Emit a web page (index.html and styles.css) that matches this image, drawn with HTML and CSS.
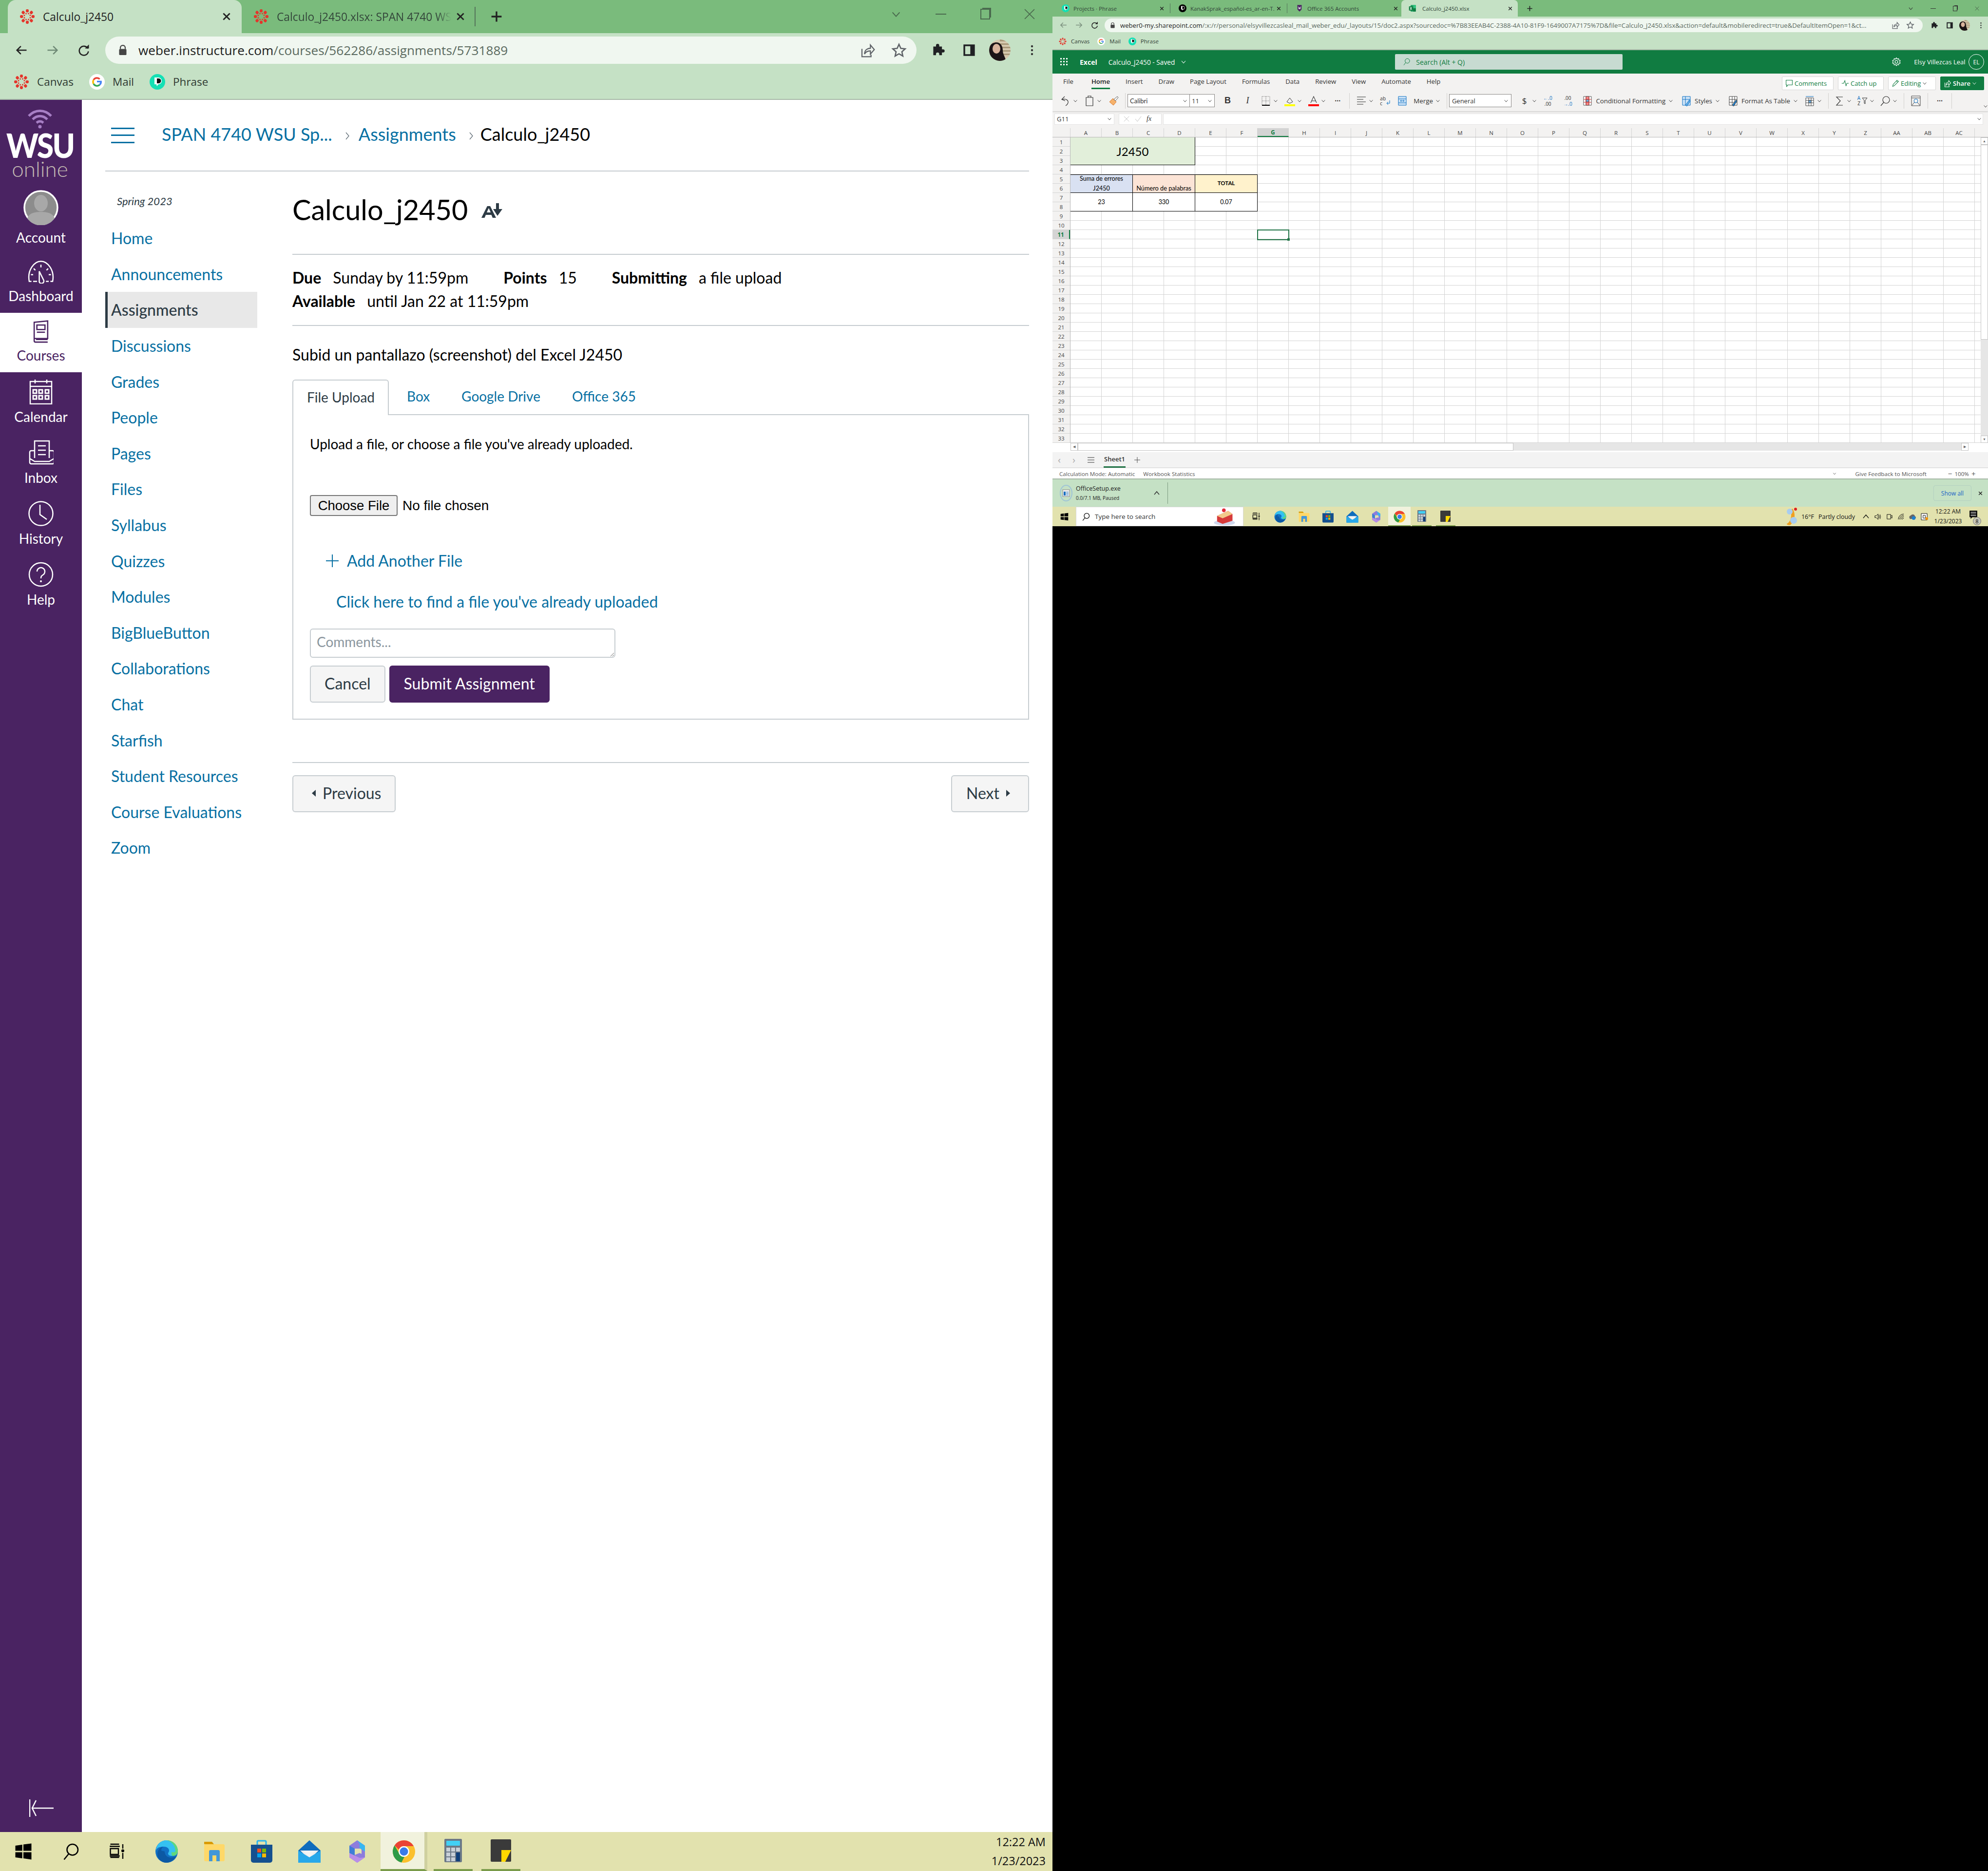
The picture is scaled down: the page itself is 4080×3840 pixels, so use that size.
FILE: index.html
```html
<!DOCTYPE html>
<html lang="en">
<head>
<meta charset="utf-8">
<title>Calculo_j2450</title>
<link rel="stylesheet" href="styles.css">
</head>
<body>
<svg class="defs" width="0" height="0" aria-hidden="true">
  <symbol id="canvas" viewBox="0 0 32 32"><g fill="#e4352b">
    <rect x="13" y="1" width="6" height="6.5" rx="2.4"/><rect x="13" y="1" width="6" height="6.5" rx="2.4" transform="rotate(45 16 16)"/><rect x="13" y="1" width="6" height="6.5" rx="2.4" transform="rotate(90 16 16)"/><rect x="13" y="1" width="6" height="6.5" rx="2.4" transform="rotate(135 16 16)"/><rect x="13" y="1" width="6" height="6.5" rx="2.4" transform="rotate(180 16 16)"/><rect x="13" y="1" width="6" height="6.5" rx="2.4" transform="rotate(225 16 16)"/><rect x="13" y="1" width="6" height="6.5" rx="2.4" transform="rotate(270 16 16)"/><rect x="13" y="1" width="6" height="6.5" rx="2.4" transform="rotate(315 16 16)"/>
    <circle cx="16" cy="9.5" r="1.5" transform="rotate(22 16 16)"/><circle cx="16" cy="9.5" r="1.5" transform="rotate(67 16 16)"/><circle cx="16" cy="9.5" r="1.5" transform="rotate(112 16 16)"/><circle cx="16" cy="9.5" r="1.5" transform="rotate(157 16 16)"/><circle cx="16" cy="9.5" r="1.5" transform="rotate(202 16 16)"/><circle cx="16" cy="9.5" r="1.5" transform="rotate(247 16 16)"/><circle cx="16" cy="9.5" r="1.5" transform="rotate(292 16 16)"/><circle cx="16" cy="9.5" r="1.5" transform="rotate(337 16 16)"/></g></symbol>
  <symbol id="phrase" viewBox="0 0 32 32"><circle cx="16" cy="16" r="16" fill="#14e0b4"/><path d="M10 7h8a7 7 0 0 1 0 14l-3 4-1-4h-4z" fill="#fff"/><path d="M15 9h3a5 5 0 0 1 1 10h-4z" fill="#111"/></symbol>
  <symbol id="phrase-k" viewBox="0 0 32 32"><circle cx="16" cy="16" r="16" fill="#000"/><path d="M10 7h8a7 7 0 0 1 0 14l-3 4-1-4h-4z" fill="#fff"/><path d="M15 9h3a5 5 0 0 1 1 10h-4z" fill="#000"/></symbol>
  <symbol id="google" viewBox="0 0 32 32"><circle cx="16" cy="16" r="16" fill="#fff"/><path d="M16 8a8 8 0 0 1 5.6 2.2" fill="none" stroke="#ea4335" stroke-width="3.4"/><path d="M9 12a8 8 0 0 1 7-4" fill="none" stroke="#ea4335" stroke-width="3.4"/><path d="M9 20a8 8 0 0 1 0-8" fill="none" stroke="#fbbc05" stroke-width="3.4"/><path d="M9 20a8 8 0 0 0 12.6 2" fill="none" stroke="#34a853" stroke-width="3.4"/><path d="M16 15.4h8.2a8 8 0 0 1-2.6 6.6" fill="none" stroke="#4285f4" stroke-width="3.4"/></symbol>
  <symbol id="x" viewBox="0 0 20 20"><path d="M4 4l12 12M16 4L4 16" stroke="currentColor" stroke-width="2.6" fill="none"/></symbol>
  <symbol id="plus" viewBox="0 0 20 20"><path d="M10 2v16M2 10h16" stroke="currentColor" stroke-width="2.6" fill="none"/></symbol>
  <symbol id="chev" viewBox="0 0 12 12"><path d="M2 4l4 4.5L10 4" stroke="currentColor" stroke-width="1.1" fill="none"/></symbol>
  <symbol id="back" viewBox="0 0 24 24"><path d="M21 12H4M11 5l-7 7 7 7" stroke="currentColor" stroke-width="2.2" fill="none"/></symbol>
  <symbol id="fwd" viewBox="0 0 24 24"><path d="M3 12h17M13 5l7 7-7 7" stroke="currentColor" stroke-width="2.2" fill="none"/></symbol>
  <symbol id="reload" viewBox="0 0 24 24"><path d="M19 9a8 8 0 1 0 1 5" stroke="currentColor" stroke-width="2.2" fill="none"/><path d="M14 9h7V2z" fill="currentColor"/></symbol>
  <symbol id="lock" viewBox="0 0 16 20"><path d="M4 8V6a4 4 0 0 1 8 0v2" stroke="#444" stroke-width="1.8" fill="none"/><rect x="2" y="8" width="12" height="10" rx="1.5" fill="#444"/></symbol>
  <symbol id="share" viewBox="0 0 24 24"><path d="M3 10v12h14v-3" stroke="#5f6368" stroke-width="1.7" fill="none"/><path d="M7 18c0-6 4-9 9-9V4l6 7-6 7v-5c-4 0-7 1-9 5z" stroke="#5f6368" stroke-width="1.7" fill="none"/></symbol>
  <symbol id="star" viewBox="0 0 24 24"><path d="M12 3l2.8 6.2 6.7.7-5 4.5 1.4 6.6L12 17.6 6.1 21l1.4-6.6-5-4.5 6.7-.7z" stroke="#5f6368" stroke-width="2" fill="none"/></symbol>
  <symbol id="puzzle" viewBox="0 0 24 24"><path d="M4 7h5V5a3 3 0 0 1 6 0v2h5v5h2a3 3 0 0 1 0 6h-2v5h-5v-2a3 3 0 0 0-6 0v2H4z" fill="#202124" transform="translate(0 -1) scale(.95)"/></symbol>
  <symbol id="panel" viewBox="0 0 24 24"><path fill-rule="evenodd" d="M2 2h20v20H2zM5 5v14h9V5z" fill="#202124"/></symbol>
  <symbol id="dots" viewBox="0 0 8 24"><circle cx="4" cy="4" r="2.2" fill="#333"/><circle cx="4" cy="12" r="2.2" fill="#333"/><circle cx="4" cy="20" r="2.2" fill="#333"/></symbol>
  <symbol id="avatar" viewBox="0 0 44 44"><clipPath id="ac"><circle cx="22" cy="22" r="22"/></clipPath><g clip-path="url(#ac)"><rect width="44" height="44" fill="#d6c9ae"/><path d="M22 0h22v4H22zm0 8h22v3H22zm0 7h22v3H22zm0 7h22v3H22zm0 7h22v3H22z" fill="#a89878"/><path d="M0 44V22C0 10 8 6 15 6s13 6 13 16 6 14 6 22z" fill="#1c1416"/><ellipse cx="15" cy="19" rx="8" ry="10" fill="#d9b39c"/></g></symbol>
  <symbol id="win" viewBox="0 0 24 24"><path d="M1 4l9.5-1.4V11H1zM12 2.4L23 1v10H12zM1 13h9.5v8.4L1 20zM12 13h11v10l-11-1.6z" fill="#000"/></symbol>
  <symbol id="mag" viewBox="0 0 24 24"><circle cx="14.5" cy="9.5" r="7.5" fill="none" stroke="#000" stroke-width="1.7"/><path d="M9.5 15L3 23" stroke="#000" stroke-width="1.7"/></symbol>
  <symbol id="taskv" viewBox="0 0 24 24"><path d="M3 2h12M3 4v1h12V4M3 8h11v8H3zM3 20h12M3 19v-1h12v1M20 2v6M20 14v8" stroke="#000" stroke-width="1.6" fill="none"/><circle cx="20" cy="11" r="2" fill="#000"/></symbol>
  <symbol id="edge" viewBox="0 0 48 48"><circle cx="24" cy="24" r="23" fill="#1170c4"/><path d="M2 22C3 9 13 1 24 1c13 0 23 10 23 22 0 7-6 10-12 10-5 0-8-2-8-5 0-2 2-3 2-6 0-5-5-8-11-8C10 14 4 16 2 22z" fill="#35c1f1"/><path d="M47 23c0-12-10-22-23-22 9 2 18 10 18 22-1 3-4 3-8 2 0 3 0 8 3 8 6 0 10-4 10-10z" fill="#5fd77c"/><path d="M20 24c0 9 8 14 16 12 3 0 6-1 8-3-4 8-12 14-21 14-10 0-18-8-18-18 0-7 5-14 12-15-3 2-4 5-4 8 0 1 7 1 7 2z" fill="#0c59a4"/></symbol>
  <symbol id="files" viewBox="0 0 48 48"><path d="M3 4h16l4 5H3z" fill="#d99a00"/><rect x="3" y="9" width="42" height="35" rx="3" fill="#ffd869"/><path d="M13 44V24a3 3 0 0 1 3-3h16a3 3 0 0 1 3 3v20h-7V32h-8v12z" fill="#4297d9"/></symbol>
  <symbol id="store" viewBox="0 0 48 48"><path d="M15 10V4a2 2 0 0 1 2-2h14a2 2 0 0 1 2 2v6" fill="none" stroke="#2ab4ee" stroke-width="3"/><path d="M2 10h44v32a5 5 0 0 1-5 5H7a5 5 0 0 1-5-5z" fill="#15508f"/><rect x="15" y="18" width="8" height="8" fill="#f25022"/><rect x="25" y="18" width="8" height="8" fill="#7fba00"/><rect x="15" y="28" width="8" height="8" fill="#00a4ef"/><rect x="25" y="28" width="8" height="8" fill="#ffb900"/></symbol>
  <symbol id="mail" viewBox="0 0 48 48"><path d="M1 22L24 1l23 21v25H1z" fill="#0f6cbd"/><path d="M5 22h38L24 40z" fill="#eee"/><path d="M1 22l23 25H1z" fill="#1aa0e4"/><path d="M47 22L24 47h23z" fill="#3ac6f5"/><path d="M11 22l13 14 13-14z" fill="#f4f4f4"/><path d="M1 22l23 14 23-14v25H1z" fill="#28a8ea"/></symbol>
  <symbol id="loop" viewBox="0 0 48 48"><path d="M24 1l16 11v24L24 47 8 36V12z" fill="#8d7ddc"/><path d="M24 1l16 11v12L29 17V8z" fill="#38b6f1"/><path d="M8 12l11 6v20l-11-2z" fill="#3e7fd6"/><path d="M24 47L8 36v-9l21 10 11-1z" fill="#b98ee8"/><path d="M19 18h10a4 4 0 0 1 4 4v7l-4-2-10 4z" fill="#e2e2ae"/></symbol>
  <symbol id="chrome" viewBox="0 0 48 48"><circle cx="24" cy="24" r="23" fill="#fbc02d"/><path d="M24 1a23 23 0 0 1 20 12H24a11 11 0 0 0-10.500 7L4.700 11.500A23 23 0 0 1 24 1z" fill="#ea4335"/><path d="M4.700 11.500L14 27.500a11 11 0 0 0 11 7.400L19 46.500A23 23 0 0 1 4.700 11.500z" fill="#2e9b47"/><circle cx="24" cy="24" r="11" fill="#fff"/><circle cx="24" cy="24" r="8.500" fill="#3a7be8"/></symbol>
  <symbol id="calc" viewBox="0 0 36 48"><rect width="36" height="48" rx="2" fill="#6b7886"/><rect x="4" y="4" width="28" height="10" rx="1" fill="#41d0f5"/><g fill="#c8d0d8"><rect x="4" y="18" width="8" height="8"/><rect x="14" y="18" width="8" height="8"/><rect x="24" y="18" width="8" height="8"/><rect x="4" y="28" width="8" height="8"/><rect x="14" y="28" width="8" height="8"/><rect x="4" y="38" width="8" height="8"/><rect x="14" y="38" width="8" height="8"/></g><rect x="24" y="28" width="8" height="18" fill="#103f7a"/></symbol>
  <symbol id="sticky" viewBox="0 0 42 46"><rect width="42" height="46" rx="2" fill="#3a3a3a"/><path d="M22 22h20L30 46h-8z" fill="#ffd800"/></symbol>
  <symbol id="excel" viewBox="0 0 24 24"><rect x="6" y="2" width="16" height="20" rx="1.500" fill="#21a366"/><rect x="14" y="2" width="8" height="10" fill="#33c481"/><rect x="14" y="12" width="8" height="10" fill="#107c41"/><rect x="1" y="6" width="13" height="13" rx="1" fill="#107c41"/><path d="M4.500 8.500l5 8M9.500 8.500l-5 8" stroke="#fff" stroke-width="1.600"/></symbol>
  <symbol id="wsu" viewBox="0 0 24 28"><path d="M4 2h16l-1 17-7 7-7-7z" fill="#4a2362"/><path d="M8 8l2 9 2-6 2 6 2-9" stroke="#fff" stroke-width="1.600" fill="none"/></symbol>
</svg>

<main class="desktop">
  <section class="win-left">
    <header class="chrome-tabs">
      <div class="ctab ctab-active">
        <svg class="fav"><use href="#canvas"/></svg>
        <span class="ctab-title">Calculo_j2450</span>
        <svg class="ctab-x"><use href="#x"/></svg>
      </div>
      <div class="ctab">
        <svg class="fav"><use href="#canvas"/></svg>
        <span class="ctab-title ctab-fade">Calculo_j2450.xlsx: SPAN 4740 WSU</span>
        <svg class="ctab-x"><use href="#x"/></svg>
      </div>
      <span class="ctab-sep"></span>
      <svg class="ctab-plus"><use href="#plus"/></svg>
      <div class="winctl">
        <svg class="wc"><use href="#chev"/></svg>
        <span class="wc-min"></span>
        <span class="wc-max"></span>
        <svg class="wc wc-close" viewBox="0 0 20 20"><path d="M1 1l18 18M19 1L1 19" stroke="currentColor" stroke-width="1.500"/></svg>
      </div>
    </header>
    <div class="chrome-bar">
      <svg class="nav-ic"><use href="#back"/></svg>
      <svg class="nav-ic dim"><use href="#fwd"/></svg>
      <svg class="nav-ic"><use href="#reload"/></svg>
      <div class="omni">
        <svg class="lock"><use href="#lock"/></svg>
        <span class="url"><b>weber.instructure.com</b>/courses/562286/assignments/5731889</span>
        <svg class="omni-ic"><use href="#share"/></svg>
        <svg class="omni-ic"><use href="#star"/></svg>
      </div>
      <svg class="ext-ic"><use href="#puzzle"/></svg>
      <svg class="ext-ic"><use href="#panel"/></svg>
      <svg class="ava"><use href="#avatar"/></svg>
      <svg class="dots"><use href="#dots"/></svg>
    </div>
    <nav class="chrome-marks">
      <a class="mark"><svg class="fav"><use href="#canvas"/></svg>Canvas</a>
      <a class="mark"><svg class="fav"><use href="#google"/></svg>Mail</a>
      <a class="mark"><svg class="fav"><use href="#phrase"/></svg>Phrase</a>
    </nav>

    <div class="app">
      <aside class="global-nav">
        <div class="logo">
          <svg class="wifi" viewBox="0 0 52 40"><path d="M3 14C16 0 36 0 49 14M11 21c9-9 21-9 30 0M19 28c5-4 9-4 14 0" fill="none" stroke="#a77fc5" stroke-width="5"/><circle cx="26" cy="36" r="3.500" fill="#a77fc5"/></svg>
          <span class="logo-wsu">WSU</span>
          <span class="logo-online">online</span>
        </div>
        <a class="gn gn-account">
          <svg class="gn-avatar" viewBox="0 0 72 72"><circle cx="36" cy="36" r="34" fill="#8c8c8c" stroke="#fff" stroke-width="3.500"/><ellipse cx="36" cy="27" rx="14" ry="17" fill="#a8a8a8"/><path d="M8 58c4-12 18-13 28-13s24 1 28 13a34 34 0 0 1-56 0z" fill="#a8a8a8"/></svg>
          <span>Account</span>
        </a>
        <a class="gn gn-short">
          <svg class="gn-ic gn-dash" viewBox="2 4 48 42" fill="none" stroke="#fff" stroke-width="2.200"><path d="M9 42H5C1 22 14 6 26 6s25 16 21 36h-4"/><path d="M26 12v5M13 19l3 3M39 19l-3 3M8 30h4M44 30h-4"/><path d="M23 24l8 16a4 4 0 0 1-8 3z"/><path d="M12 42h7M35 42h5"/></svg>
          <span>Dashboard</span>
        </a>
        <a class="gn gn-short gn-active">
          <svg class="gn-ic" viewBox="0 0 52 52" fill="none" stroke="#4a2362" stroke-width="2.800"><path d="M11 42V6l30-3v39zM11 42v5a3 3 0 0 0 3 3h27M15 44h26"/><rect x="17" y="12" width="18" height="10"/><path d="M17 28h18"/></svg>
          <span>Courses</span>
        </a>
        <a class="gn">
          <svg class="gn-ic" viewBox="0 0 52 52" fill="none" stroke="#fff" stroke-width="2.500"><rect x="4" y="5" width="44" height="46"/><path d="M4 15h44M14 1v8M38 1v8"/><g stroke-width="3"><path d="M10 22h7v7h-7zM22 22h7v7h-7zM35 22h7v7h-7zM10 34h7v7h-7zM22 34h7v7h-7zM35 34h7v7h-7z"/></g></svg>
          <span>Calendar</span>
        </a>
        <a class="gn">
          <svg class="gn-ic" viewBox="0 0 52 52" fill="none" stroke="#fff" stroke-width="2.500"><path d="M13 37V2h30v35"/><path d="M20 12h16M20 21h16M20 30h16"/><path d="M13 22H6a3 3 0 0 0-3 3v21a3 3 0 0 0 3 3h44a3 3 0 0 0 3-3V25a3 3 0 0 0-3-3h-7M3 38l10 6h30l10-6"/></svg>
          <span>Inbox</span>
        </a>
        <a class="gn">
          <svg class="gn-ic" viewBox="0 0 52 52" fill="none" stroke="#fff" stroke-width="2.500"><circle cx="26" cy="26" r="24.500"/><path d="M24 12v20l14 10" transform="translate(0 -4)"/></svg>
          <span>History</span>
        </a>
        <a class="gn">
          <svg class="gn-ic" viewBox="0 0 52 52" fill="none" stroke="#fff" stroke-width="2.500"><circle cx="26" cy="26" r="24"/><path d="M18 20a8 8 0 1 1 12 7c-3 2-4 3-4 7"/><circle cx="26" cy="40" r="2" fill="#fff" stroke="none"/></svg>
          <span>Help</span>
        </a>
        <svg class="collapse" viewBox="0 0 50 36" fill="none" stroke="#fff" stroke-width="2.500"><path d="M1 0v36M50 18H6M14 2L6 18l8 16"/></svg>
      </aside>

      <div class="content">
        <header class="crumbs">
          <span class="burger"><i></i><i></i><i></i></span>
          <a class="crumb">SPAN 4740 WSU Sp...</a>
          <svg class="crumb-sep" viewBox="0 0 10 20"><path d="M2 3l6 7-6 7" fill="none" stroke="#5f6c75" stroke-width="1.300"/></svg>
          <a class="crumb">Assignments</a>
          <svg class="crumb-sep" viewBox="0 0 10 20"><path d="M2 3l6 7-6 7" fill="none" stroke="#5f6c75" stroke-width="1.300"/></svg>
          <span class="crumb crumb-now">Calculo_j2450</span>
        </header>
        <div class="course">
          <nav class="course-nav">
            <div class="term">Spring 2023</div>
            <a class="cn">Home</a>
            <a class="cn">Announcements</a>
            <a class="cn cn-active">Assignments</a>
            <a class="cn">Discussions</a>
            <a class="cn">Grades</a>
            <a class="cn">People</a>
            <a class="cn">Pages</a>
            <a class="cn">Files</a>
            <a class="cn">Syllabus</a>
            <a class="cn">Quizzes</a>
            <a class="cn">Modules</a>
            <a class="cn">BigBlueButton</a>
            <a class="cn">Collaborations</a>
            <a class="cn">Chat</a>
            <a class="cn">Starfish</a>
            <a class="cn">Student Resources</a>
            <a class="cn">Course Evaluations</a>
            <a class="cn">Zoom</a>
          </nav>
          <article class="assignment">
            <div class="title-row">
              <h1 class="title">Calculo_j2450</h1>
              <svg class="a-ic" viewBox="0 0 44 30"><path d="M0 30L12 6h6l12 24h-7l-2.500-6H9l-2.500 6zM11 19h8l-4-9z" fill="#2d3b45"/><path d="M30 0h6v12h7L33 26 24 12h6z" fill="#2d3b45"/></svg>
            </div>
            <div class="details">
              <div class="det-line">
                <span class="det"><b>Due</b>Sunday by 11:59pm</span>
                <span class="det"><b>Points</b>15</span>
                <span class="det"><b>Submitting</b>a file upload</span>
              </div>
              <div class="det-line"><span class="det"><b>Available</b>until Jan 22 at 11:59pm</span></div>
            </div>
            <p class="desc">Subid un pantallazo (screenshot) del Excel J2450</p>
            <div class="tabs">
              <span class="tab tab-on">File Upload</span>
              <a class="tab tab-box">Box</a>
              <a class="tab tab-gd">Google Drive</a>
              <a class="tab tab-o">Office 365</a>
            </div>
            <form class="panel">
              <p class="panel-intro">Upload a file, or choose a file you've already uploaded.</p>
              <input class="file" type="file">
              <a class="add"><svg class="add-ic" viewBox="0 0 26 26"><path d="M13 0v26M0 13h26" stroke="#0770a3" stroke-width="2" fill="none"/></svg>Add Another File</a>
              <a class="find">Click here to find a file you've already uploaded</a>
              <textarea class="comments" placeholder="Comments..."></textarea>
              <div class="actions">
                <button class="btn" type="button">Cancel</button>
                <button class="btn btn-primary" type="button">Submit Assignment</button>
              </div>
            </form>
            <footer class="pager">
              <button class="btn btn-prev" type="button"><i class="tri tri-l"></i>Previous</button>
              <button class="btn btn-next" type="button">Next<i class="tri tri-r"></i></button>
            </footer>
          </article>
        </div>
      </div>
    </div>

    <footer class="taskbar">
      <svg class="tb-ic tb-win"><use href="#win"/></svg>
      <svg class="tb-ic tb-mag"><use href="#mag"/></svg>
      <svg class="tb-ic tb-task"><use href="#taskv"/></svg>
      <svg class="tb-app tb-first"><use href="#edge"/></svg>
      <svg class="tb-app"><use href="#files"/></svg>
      <svg class="tb-app"><use href="#store"/></svg>
      <svg class="tb-app"><use href="#mail"/></svg>
      <svg class="tb-app"><use href="#loop"/></svg>
      <span class="tb-on"><svg class="tb-app"><use href="#chrome"/></svg></span>
      <span class="tb-run"><svg class="tb-calc"><use href="#calc"/></svg></span>
      <span class="tb-run"><svg class="tb-sticky"><use href="#sticky"/></svg></span>
      <div class="clock"><span>12:22 AM</span><span>1/23/2023</span></div>
    </footer>
  </section>

  <section class="win-right">
    <header class="r-tabs">
      <div class="rt"><svg class="rfav"><use href="#phrase"/></svg><span class="rt-t">Projects · Phrase</span><svg class="rt-x"><use href="#x"/></svg></div>
      <span class="rt-sep"></span>
      <div class="rt"><svg class="rfav"><use href="#phrase-k"/></svg><span class="rt-t">KanakSprak_español-es_ar-en-T.r</span><svg class="rt-x"><use href="#x"/></svg></div>
      <span class="rt-sep"></span>
      <div class="rt"><svg class="rfav"><use href="#wsu"/></svg><span class="rt-t">Office 365 Accounts</span><svg class="rt-x"><use href="#x"/></svg></div>
      <div class="rt rt-on"><svg class="rfav"><use href="#excel"/></svg><span class="rt-t">Calculo_j2450.xlsx</span><svg class="rt-x"><use href="#x"/></svg></div>
      <svg class="rt-plus"><use href="#plus"/></svg>
      <div class="r-winctl">
        <svg class="rwc"><use href="#chev"/></svg>
        <span class="rwc-min"></span>
        <span class="rwc-max"></span>
        <svg class="rwc" viewBox="0 0 20 20"><path d="M3 3l14 14M17 3L3 17" stroke="#333" stroke-width="1.200"/></svg>
      </div>
    </header>
    <div class="r-bar">
      <svg class="rnav dim"><use href="#back"/></svg>
      <svg class="rnav dim"><use href="#fwd"/></svg>
      <svg class="rnav"><use href="#reload"/></svg>
      <div class="r-omni">
        <svg class="r-lock"><use href="#lock"/></svg>
        <span class="r-url"><b>weber0-my.sharepoint.com</b>/:x:/r/personal/elsyvillezcasleal_mail_weber_edu/_layouts/15/doc2.aspx?sourcedoc=%7B83EEAB4C-2388-4A10-81F9-1649007A7175%7D&amp;file=Calculo_j2450.xlsx&amp;action=default&amp;mobileredirect=true&amp;DefaultItemOpen=1&amp;ct...</span>
        <svg class="r-oic"><use href="#share"/></svg>
        <svg class="r-oic"><use href="#star"/></svg>
      </div>
      <svg class="r-ext"><use href="#puzzle"/></svg>
      <svg class="r-ext"><use href="#panel"/></svg>
      <svg class="r-ava"><use href="#avatar"/></svg>
      <svg class="r-dots"><use href="#dots"/></svg>
    </div>
    <nav class="r-marks">
      <a class="r-mark"><svg class="rfav"><use href="#canvas"/></svg>Canvas</a>
      <a class="r-mark"><svg class="rfav"><use href="#google"/></svg>Mail</a>
      <a class="r-mark"><svg class="rfav"><use href="#phrase"/></svg>Phrase</a>
    </nav>

    <header class="xl-head">
      <svg class="waffle" viewBox="0 0 16 16" fill="#fff"><rect width="3" height="3"/><rect x="6" width="3" height="3"/><rect x="12" width="3" height="3"/><rect y="6" width="3" height="3"/><rect x="6" y="6" width="3" height="3"/><rect x="12" y="6" width="3" height="3"/><rect y="12" width="3" height="3"/><rect x="6" y="12" width="3" height="3"/><rect x="12" y="12" width="3" height="3"/></svg>
      <b class="xl-brand">Excel</b>
      <span class="xl-doc">Calculo_j2450 - Saved</span>
      <svg class="xl-chev"><use href="#chev"/></svg>
      <div class="xl-search">
        <svg class="xl-mag" viewBox="0 0 24 24"><circle cx="14" cy="9" r="7" fill="none" stroke="#107c41" stroke-width="1.500"/><path d="M9 14l-6 8" stroke="#107c41" stroke-width="1.500"/></svg>
        <span>Search (Alt + Q)</span>
      </div>
      <svg class="xl-gear" viewBox="0 0 24 24" fill="none" stroke="#fff" stroke-width="1.500"><circle cx="12" cy="12" r="3.500"/><path d="M12 2l2 3 3.500-1 .5 3.500 3.500 1-1.500 3.500 1.500 3-3.500 1-.5 3.500-3.500-1-2 3-2-3-3.500 1-.5-3.500-3.500-1 1.500-3-1.500-3.500 3.500-1 .5-3.500 3.500 1z"/></svg>
      <span class="xl-user">Elsy Villezcas Leal</span>
      <span class="xl-init">EL</span>
    </header>

    <section class="ribbon">
      <div class="rb-top">
        <nav class="rb-tabs">
          <a class="rb-file">File</a><a class="rb-home">Home</a><a>Insert</a><a>Draw</a><a>Page Layout</a><a>Formulas</a><a>Data</a><a>Review</a><a>View</a><a>Automate</a><a>Help</a>
        </nav>
        <div class="rb-btns">
          <a class="rbb rbb-c"><svg class="rbi" viewBox="0 0 20 20" fill="none" stroke="#107c41" stroke-width="1.300"><path d="M2 2h16v12H7l-4 5 1-5H2z"/></svg>Comments</a>
          <a class="rbb rbb-u"><svg class="rbi" viewBox="0 0 20 20" fill="none" stroke="#107c41" stroke-width="1.300"><path d="M1 10h5l3-7 3 14 2-7h5"/></svg>Catch up</a>
          <a class="rbb rbb-e"><svg class="rbi" viewBox="0 0 20 20" fill="none" stroke="#107c41" stroke-width="1.300"><path d="M3 18l1-5L14 2l4 3L7 16zM12 4l4 3"/></svg>Editing<svg class="tc"><use href="#chev"/></svg></a>
          <a class="rbb rbb-s"><svg class="rbi" viewBox="0 0 20 20" fill="none" stroke="#fff" stroke-width="1.300"><path d="M3 8v11h11v-3M6 15c0-5 3-8 7-8V3l5 6-5 6v-4c-3 0-5 1-7 4z"/></svg>Share<svg class="tc"><use href="#chev"/></svg></a>
        </div>
      </div>
      <div class="rb-tools">
        <div class="tl">
          <span class="tg"><svg class="ti" viewBox="0 0 22 22" fill="none" stroke="#333" stroke-width="1.200"><path d="M9 2L3 8l7 3M4 8c8-2 13 2 12 7-1 3-3 5-5 6"/></svg><svg class="tc"><use href="#chev"/></svg></span>
          <span class="tg"><svg class="ti" viewBox="0 0 22 22" fill="none" stroke="#333" stroke-width="1.200"><path d="M4 4h14v17H4zM8 4V1h6v3z"/></svg><svg class="tc"><use href="#chev"/></svg></span>
          <svg class="ti" viewBox="0 0 22 22" fill="none"><path d="M3 13l7-7 7 7-6 7z" fill="#f6b26b" stroke="#d9762a"/><path d="M12 8l7-6 2 2-6 7z" fill="#fff" stroke="#555"/></svg>
          <span class="tsep"></span>
          <div class="fbox">
            <span class="fbox-a">Calibri<svg class="tc"><use href="#chev"/></svg></span>
            <span class="fbox-b">11<svg class="tc"><use href="#chev"/></svg></span>
          </div>
          <b class="tx tx-b">B</b>
          <i class="tx tx-i">I</i>
          <span class="tg"><svg class="ti" viewBox="0 0 22 22" fill="none" stroke="#888" stroke-width="1" stroke-dasharray="2 1"><path d="M3 2h16v18H3zM3 11h16M11 2v18"/><path d="M3 20h16" stroke="#000" stroke-width="2" stroke-dasharray="none"/></svg><svg class="tc"><use href="#chev"/></svg></span>
          <span class="tg"><svg class="ti" viewBox="0 0 22 22" fill="none" stroke="#333"><path d="M5 13l6-8 6 8-6 3z"/><path d="M0 18h22v5H0z" fill="#ff0" stroke="none"/></svg><svg class="tc"><use href="#chev"/></svg></span>
          <span class="tg"><svg class="ti" viewBox="0 0 22 22" fill="none" stroke="#333" stroke-width="1.100"><path d="M5 15l6-13 6 13M7 11h8"/><path d="M0 18h22v5H0z" fill="#f00" stroke="none"/></svg><svg class="tc"><use href="#chev"/></svg></span>
          <span class="tdots">···</span>
          <span class="tsep"></span>
          <span class="tg"><svg class="ti" viewBox="0 0 22 22" stroke="#333" stroke-width="1.200"><path d="M2 3h18M2 8h13M2 13h18M2 18h13"/></svg><svg class="tc"><use href="#chev"/></svg></span>
          <span class="wrap-ic"><span class="wrap-t">ab<br>c</span><svg class="wrap-a" viewBox="0 0 10 12"><path d="M8 1v6H2l3-3M2 7l3 3" stroke="#0b6fc2" fill="none"/></svg></span>
          <span class="tg tg-merge"><svg class="ti" viewBox="0 0 22 22" fill="#cfe4f7" stroke="#0b6fc2"><path d="M3 2h16v18H3z"/><path d="M3 7h16M3 15h16M7 11h8M7 11l2-2M7 11l2 2M15 11l-2-2M15 11l-2 2"/></svg><span class="tl-t">Merge</span><svg class="tc"><use href="#chev"/></svg></span>
          <span class="tsep"></span>
          <span class="gbox">General<svg class="tc"><use href="#chev"/></svg></span>
          <span class="tg tg-d"><span class="tdollar">$</span><svg class="tc"><use href="#chev"/></svg></span>
          <span class="dec dec-first"><i class="dec-a">←.0</i><i>.00</i></span>
          <span class="dec"><i>.00</i><i class="dec-a">→.0</i></span>
          <span class="tg tg-t"><svg class="ti" viewBox="0 0 22 22" fill="#fff" stroke="#555"><path d="M3 2h16v18H3z"/><path d="M8 2h6v18H8z" fill="#f88"/><path d="M8 8h6v5H8z" fill="#6ab0e6"/><path d="M3 8h16M3 14h16M8 2v18M14 2v18" stroke="#c33"/></svg><span class="tl-t">Conditional Formatting</span><svg class="tc"><use href="#chev"/></svg></span>
          <span class="tg tg-t"><svg class="ti" viewBox="0 0 22 22" fill="#cfe4f7" stroke="#0b6fc2"><path d="M3 2h16v18H3zM3 8h16M9 2v18"/><path d="M9 20l8-11 2 2-7 11z" fill="#6ab0e6"/></svg><span class="tl-t">Styles</span><svg class="tc"><use href="#chev"/></svg></span>
          <span class="tg tg-t"><svg class="ti" viewBox="0 0 22 22" fill="#fff" stroke="#444"><path d="M3 2h16v18H3zM3 8h16M3 14h16M9 2v18M14 2v18"/><path d="M9 20l8-11 2 2-7 11z" fill="#1a7fd0"/></svg><span class="tl-t">Format As Table</span><svg class="tc"><use href="#chev"/></svg></span>
          <span class="tg"><svg class="ti" viewBox="0 0 22 22" fill="#fff" stroke="#444"><path d="M3 5h16v16H3zM3 10h16M3 15h16M9 5v16M14 5v16"/><path d="M9 10h5v5H9z" fill="#6ab0e6"/><path d="M3 2h16" stroke="#0b6fc2"/></svg><svg class="tc"><use href="#chev"/></svg></span>
          <span class="tsep"></span>
          <span class="tg tg-k"><svg class="ti" viewBox="0 0 22 22" fill="none" stroke="#333" stroke-width="1.200"><path d="M18 3H5l8 8-8 9h13"/></svg><svg class="tc"><use href="#chev"/></svg></span>
          <span class="tg tg-k"><span class="sort-t"><i class="sort-a">A</i><i>Z</i></span><svg class="sort-f" viewBox="0 0 12 14"><path d="M1 1h10L7 6v7L5 12V6z" fill="none" stroke="#333"/></svg><svg class="tc"><use href="#chev"/></svg></span>
          <span class="tg tg-k"><svg class="ti" viewBox="0 0 22 22" fill="none" stroke="#333" stroke-width="1.200"><circle cx="13" cy="9" r="7"/><path d="M8 14l-6 7"/></svg><svg class="tc"><use href="#chev"/></svg></span>
          <span class="tsep"></span>
          <svg class="ti" viewBox="0 0 22 22" fill="none" stroke="#444"><path d="M2 1h18v20H2zM2 5h18" /><circle cx="11" cy="11" r="4" stroke="#0b6fc2"/><path d="M8 14l-5 6M14 14l5 6"/></svg>
          <span class="tsep"></span>
          <span class="tdots">···</span>
          <span class="tsep"></span>
          <svg class="tc tc-end"><use href="#chev"/></svg>
        </div>
      </div>
    </section>

    <div class="formula">
      <span class="namebox">G11<svg class="tc"><use href="#chev"/></svg></span>
      <span class="fxbox">
        <svg class="fxi" viewBox="0 0 16 16"><path d="M2 2l12 12M14 2L2 14" stroke="#bbb" fill="none"/></svg>
        <svg class="fxi" viewBox="0 0 16 16"><path d="M1 8l5 6L15 2" stroke="#bbb" fill="none"/></svg>
        <i class="fxt">fx</i>
      </span>
      <span class="fxinput"><svg class="tc"><use href="#chev"/></svg></span>
    </div>

    <div class="sheet">
      <div class="cols">
        <span class="corner"></span>
        <span>A</span><span>B</span><span>C</span><span>D</span><span>E</span><span>F</span><span class="col-on">G</span><span>H</span><span>I</span><span>J</span><span>K</span><span>L</span><span>M</span><span>N</span><span>O</span><span>P</span><span>Q</span><span>R</span><span>S</span><span>T</span><span>U</span><span>V</span><span>W</span><span>X</span><span>Y</span><span>Z</span><span>AA</span><span>AB</span><span>AC</span>
      </div>
      <div class="body">
        <div class="rows">
          <span>1</span><span>2</span><span>3</span><span>4</span><span>5</span><span>6</span><span>7</span><span>8</span><span>9</span><span>10</span><span class="row-on">11</span><span>12</span><span>13</span><span>14</span><span>15</span><span>16</span><span>17</span><span>18</span><span>19</span><span>20</span><span>21</span><span>22</span><span>23</span><span>24</span><span>25</span><span>26</span><span>27</span><span>28</span><span>29</span><span>30</span><span>31</span><span>32</span><span>33</span>
        </div>
        <div class="cells">
          <div class="c c-title">J2450</div>
          <div class="c c-a">Suma de errores<br>J2450</div>
          <div class="c c-b">Número de palabras</div>
          <div class="c c-c">TOTAL</div>
          <div class="c c-v1">23</div>
          <div class="c c-v2">330</div>
          <div class="c c-v3">0.07</div>
          <div class="c c-sel"><i class="handle"></i></div>
        </div>
        <div class="vscroll"><span class="vs-btn">▲</span><span class="vs-thumb"></span><span class="vs-track"></span><span class="vs-btn">▼</span></div>
      </div>
      <div class="hscroll"><span class="hs-btn">◀</span><span class="hs-thumb"></span><span class="hs-track"></span><span class="hs-btn">▶</span></div>
    </div>

    <div class="sheetbar">
      <span class="sb-nav">‹</span><span class="sb-nav">›</span>
      <svg class="sb-menu" viewBox="0 0 14 14"><path d="M0 2h14M0 7h14M0 12h14" stroke="#333" stroke-width="1.200"/></svg>
      <span class="sb-tab">Sheet1</span>
      <svg class="sb-plus" viewBox="0 0 14 14"><path d="M7 0v14M0 7h14" stroke="#333"/></svg>
    </div>
    <div class="status">
      <span>Calculation Mode: Automatic</span><span>Workbook Statistics</span>
      <svg class="tc st-chev"><use href="#chev"/></svg>
      <span>Give Feedback to Microsoft</span>
      <span class="st-zoom"><i>−</i>100%<i>+</i></span>
    </div>
    <div class="dlbar">
      <svg class="dl-ic" viewBox="0 0 26 34"><ellipse cx="13" cy="17" rx="12" ry="16" fill="none" stroke="#9fc4d6" stroke-width="2"/><rect x="6" y="10" width="14" height="14" fill="#eee" stroke="#888"/><rect x="8" y="14" width="4" height="8" fill="#1a6fc2"/><path d="M13 15h5M13 18h5M13 21h5" stroke="#1a6fc2"/></svg>
      <div class="dl-t"><span class="dl-n">OfficeSetup.exe</span><span class="dl-s">0.0/7.1 MB, Paused</span></div>
      <svg class="dl-up" viewBox="0 0 12 10"><path d="M1 8l5-6 5 6" fill="none" stroke="#333" stroke-width="1.500"/></svg>
      <span class="dl-sep"></span>
      <a class="dl-all">Show all</a>
      <svg class="dl-x"><use href="#x"/></svg>
    </div>
    <footer class="r-taskbar">
      <svg class="rtb-win"><use href="#win"/></svg>
      <div class="rtb-search">
        <svg class="rtb-mag"><use href="#mag"/></svg>
        <span>Type here to search</span>
        <svg class="rtb-pie" viewBox="0 0 72 60"><ellipse cx="36" cy="50" rx="34" ry="9" fill="#cfd8ee"/><path d="M12 28L48 12l14 10v22L30 54 12 46z" fill="#d63a3a"/><path d="M12 28L48 12l14 10-32 14z" fill="#f3c98b"/><circle cx="34" cy="10" r="6" fill="#e22b3a"/></svg>
      </div>
      <svg class="rtb-ic rtb-task"><use href="#taskv"/></svg>
      <svg class="rtb-ic"><use href="#edge"/></svg>
      <svg class="rtb-ic"><use href="#files"/></svg>
      <svg class="rtb-ic"><use href="#store"/></svg>
      <svg class="rtb-ic"><use href="#mail"/></svg>
      <svg class="rtb-ic"><use href="#loop"/></svg>
      <span class="rtb-on"><svg class="rtb-ic"><use href="#chrome"/></svg></span>
      <span class="rtb-run"><svg class="rtb-calc"><use href="#calc"/></svg></span>
      <span class="rtb-run"><svg class="rtb-sticky"><use href="#sticky"/></svg></span>
      <div class="tray">
        <svg class="tr-w" viewBox="0 0 24 40"><path d="M14 4c6 10 6 22-4 33-4 2-8 0-8-2 8-3 11-16 8-29z" fill="#f0a020"/><circle cx="8" cy="10" r="6" fill="#a8cdf0"/><circle cx="16" cy="28" r="7" fill="#a8cdf0"/><circle cx="20" cy="5" r="3" fill="#d22"/></svg>
        <span class="tr-t">16°F</span>
        <span class="tr-t">Partly cloudy</span>
        <svg class="tr-i" viewBox="0 0 16 16"><path d="M2 11l6-7 6 7" fill="none" stroke="#000" stroke-width="1.300"/></svg>
        <svg class="tr-i" viewBox="0 0 16 16" fill="none" stroke="#000"><path d="M2 6h3l4-4v12l-4-4H2zM11 5q2 3 0 6M13 3q3 5 0 10"/></svg>
        <svg class="tr-i" viewBox="0 0 16 16" fill="none" stroke="#000"><path d="M3 3h8v10H3zM11 7l3-2v6l-3-2"/></svg>
        <svg class="tr-i" viewBox="0 0 16 16" fill="none" stroke="#000"><path d="M2 14a12 12 0 0 1 12-12M5 14a9 9 0 0 1 9-9M8 14a6 6 0 0 1 6-6M11 14a3 3 0 0 1 3-3"/></svg>
        <svg class="tr-i" viewBox="0 0 16 16"><path d="M1 11a4 4 0 0 1 3-6 5 5 0 0 1 9 2 3 3 0 0 1 1 5l-12 1z" fill="#666"/><circle cx="10" cy="11" r="4" fill="#1a7fd0"/></svg>
        <svg class="tr-i" viewBox="0 0 16 16"><path d="M1 1h13v14H1z" fill="#fff" stroke="#000"/><path d="M5 5h5v6H5z" fill="none" stroke="#000"/><circle cx="13" cy="12" r="3" fill="#f39200"/></svg>
        <div class="tr-clock"><span>12:22 AM</span><span>1/23/2023</span></div>
        <span class="tr-note"><svg viewBox="0 0 14 16"><path d="M0 0h14v12H5l-3 3v-3H0z" fill="#000"/><path d="M2 3h10M2 6h10M2 9h10" stroke="#fff"/></svg><i class="tr-badge">8</i></span>
      </div>
    </footer>
    <div class="void"></div>
  </section>
</main>
</body>
</html>
```

FILE: styles.css
```css
* { box-sizing: border-box; }
html, body { margin: 0; padding: 0; background: #000; }
body { width: 4080px; height: 3840px; overflow: hidden; font-family: "Lato", "Liberation Sans", sans-serif; }
a { color: inherit; text-decoration: none; }
i { font-style: normal; }
.defs { position: absolute; }
svg { display: block; flex: none; }
.desktop { display: grid; grid-template-columns: 2160px 1920px; height: 3840px; }

/* ---------- left window ---------- */
.win-left { display: flex; flex-direction: column; height: 3840px; background: #fff; min-width: 0; }
.chrome-tabs { height: 68px; background: #7abb7c; display: flex; align-items: flex-end; padding-left: 16px; font-family: "Open Sans", sans-serif; }
.ctab { height: 68px; width: 480px; display: flex; align-items: center; padding: 0 20px 0 24px; }
.ctab-active { background: #c5e1c5; border-radius: 16px 16px 0 0; }
.ctab .fav { width: 32px; height: 32px; }
.ctab-title { margin-left: 16px; font-size: 22.800px; color: #222; flex: 1; white-space: nowrap; overflow: hidden; }
.ctab:not(.ctab-active) .ctab-title { color: #33463a; }
.ctab-fade { -webkit-mask-image: linear-gradient(90deg, #000 92%, transparent); mask-image: linear-gradient(90deg, #000 92%, transparent); }
.ctab-x { width: 22px; height: 22px; color: #222; margin-left: 8px; }
.ctab-sep { width: 2px; height: 40px; background: #55745a; margin: 0 0 14px -2px; }
.ctab-plus { width: 26px; height: 26px; margin: 0 0 21px 30px; color: #222; }
.winctl { margin-left: auto; display: flex; align-items: center; gap: 70px; padding: 0 36px 0 0; height: 58px; align-self: flex-start; color: #4a6a4e; }
.wc { width: 22px; height: 22px; }
.wc-close { width: 22px; height: 22px; }
.wc-min { width: 22px; height: 2px; background: #4a6a4e; }
.wc-max { width: 20px; height: 22px; border: 2px solid #4a6a4e; box-shadow: 3px -3px 0 -1px #4a6a4e; }

.chrome-bar { height: 68px; background: #c5e1c5; display: flex; align-items: center; padding: 2px 0 0 30px; }
.nav-ic { width: 28px; height: 28px; color: #222; margin-right: 36px; }
.nav-ic.dim { color: #6f8a76; }
.omni { width: 1665px; height: 56px; margin-left: -6px; background: #f0f7f0; border-radius: 28px; display: flex; align-items: center; padding: 0 20px 0 26px; font-family: "Open Sans", sans-serif; }
.lock { width: 20px; height: 26px; }
.url { margin-left: 22px; font-size: 26.200px; color: #5b6a60; flex: 1; white-space: nowrap; }
.url b { font-weight: 400; color: #1d1d1d; }
.omni-ic { width: 32px; height: 32px; margin-left: 32px; }
.ext-ic { width: 28px; height: 30px; margin-left: 30px; }
.ext-ic + .ext-ic { margin-left: 36px; }
.ava { width: 44px; height: 44px; margin-left: 27px; }
.dots { width: 8px; height: 26px; margin-left: 40px; }

.chrome-marks { height: 69px; background: #c5e1c5; border-bottom: 2px solid #a8b9a8; display: flex; align-items: center; padding: 0 0 4px 28px; gap: 32px; font-family: "Open Sans", sans-serif; font-size: 22.500px; color: #2f3a33; }
.mark { display: flex; align-items: center; gap: 16px; }
.mark .fav { width: 32px; height: 32px; }

.app { flex: 1; display: flex; min-height: 0; }
.global-nav { width: 168px; flex: none; background: #4a2362; display: flex; flex-direction: column; color: #fff; font-size: 28px; }
.logo { height: 181px; display: flex; flex-direction: column; align-items: center; padding: 19px 4px 0 0; }
.wifi { width: 52px; height: 40px; }
.logo-wsu { font-family: "Lato", sans-serif; font-weight: 900; font-size: 68px; line-height: 56px; margin-top: 6px; letter-spacing: -3px; color: #fff; transform: scaleX(.92); }
.logo-online { font-family: "Lato", sans-serif; font-weight: 300; font-size: 44px; line-height: 36px; margin-top: 2px; color: #c5bcb4; }
.gn { height: 125px; padding-top: 14px; display: flex; flex-direction: column; align-items: center; gap: 8px; }
.gn span { line-height: 34px; }
.gn-ic { width: 52px; height: 52px; }
.gn-short { height: 122px; }
.gn-short .gn-ic { height: 48px; width: 48px; }
.gn-short .gn-dash { width: 56px; }
.gn-account { height: 134px; padding-top: 4px; }
.gn-avatar { width: 72px; height: 72px; }
.gn-active { background: #fff; color: #4a2362; }
.collapse { width: 50px; height: 36px; margin: auto 0 31px 60px; }

.content { flex: 1; padding: 0 48px; min-width: 0; }
.crumbs { height: 147px; border-bottom: 2px solid #c7cdd1; display: flex; align-items: center; padding-left: 12px; font-size: 36px; }
.burger { width: 48px; height: 32px; display: flex; flex-direction: column; justify-content: space-between; margin-right: 56px; }
.burger i { height: 3px; background: #0770a3; }
.crumb { color: #0770a3; white-space: nowrap; margin-top: -6px; }
.crumb-now { color: #000; }
.crumb-sep { width: 10px; height: 20px; margin: 2px 18px 0 26px; }
.crumb-sep + .crumb + .crumb-sep { margin-right: 14px; }
.course { display: flex; gap: 72px; }
.course-nav { width: 312px; flex: none; font-size: 32px; }
.term { height: 100px; padding: 44px 0 0 24px; font-size: 22px; font-style: italic; line-height: 34px; color: #2d3b45; }
.cn { display: flex; align-items: center; height: 73.600px; padding-left: 7px; color: #0770a3; border-left: 5px solid transparent; }
.cn-active { background: #e8e8e8; color: #2d3b45; border-left-color: #2d3b45; font-weight: 500; }

.assignment { flex: 1; min-width: 0; font-size: 32px; color: #000; }
.title-row { display: flex; align-items: center; padding-top: 42px; height: 171px; padding-bottom: 55px; border-bottom: 2px solid #c7cdd1; }
.title { margin: 0; font-size: 57.600px; font-weight: 400; line-height: 72px; }
.a-ic { width: 44px; height: 30px; margin: 4px 0 0 28px; }
.details { padding: 23px 0 25px; border-bottom: 2px solid #c7cdd1; }
.det-line { display: flex; line-height: 48px; gap: 72px; }
.det b { margin-right: 24px; }
.desc { margin: 35px 0 27px; line-height: 48px; }
.tabs { height: 71px; display: flex; align-items: stretch; font-size: 28px; }
.tab { display: flex; align-items: center; color: #0770a3; padding-bottom: 3px; }
.tab-on { width: 198px; padding-left: 28px; border: 2px solid #c7cdd1; border-bottom: 0; border-radius: 6px 6px 0 0; color: #2d3b45; background: #fff; margin-bottom: -2px; position: relative; z-index: 1; }
.tab-box { margin-left: 37px; }
.tab-gd { margin-left: 65px; }
.tab-o { margin-left: 65px; }
.panel { border: 2px solid #c7cdd1; padding: 35px 34px 31px; height: 627px; display: flex; flex-direction: column; align-items: flex-start; }
.panel-intro { margin: 0; line-height: 48px; font-size: 28px; }
.file { margin-top: 81px; font-family: "Liberation Sans", sans-serif; font-size: 28px; height: 43px; }
.file::file-selector-button { height: 43px; width: 180px; padding: 0; margin-right: 10px; font: inherit; font-size: 27.500px; border: 2px solid #767676; border-radius: 4px; background: #efefef; color: #000; }
.add { margin: 68px 0 0 33px; display: flex; align-items: center; gap: 17px; line-height: 48px; color: #0770a3; }
.add-ic { width: 26px; height: 26px; }
.find { margin: 36px 0 0 54px; line-height: 48px; color: #0770a3; }
.comments { margin-top: 31px; width: 627px; height: 60px; border: 2px solid #c7cdd1; border-radius: 6px; padding: 8px 12px; font-family: "Lato", sans-serif; font-size: 28px; resize: both; outline: 0; }
.comments::placeholder { color: #8b969e; }
.actions { margin-top: 16px; display: flex; gap: 8px; }
.btn { height: 76px; padding: 0 28px 3px; border: 2px solid #c7cdd1; border-radius: 6px; background: #f5f5f5; color: #2d3b45; font-family: "Lato", sans-serif; font-size: 32px; display: flex; align-items: center; }
.btn-primary { background: #4a2362; border-color: #4a2362; color: #fff; }
.btn-prev { width: 212px; padding-left: 38px; }
.btn-next { width: 160px; justify-content: center; padding: 0 8px 3px 0; }
.pager { margin-top: 87px; padding-top: 25px; border-top: 2px solid #c7cdd1; display: flex; justify-content: space-between; }
.tri { width: 0; height: 0; border-top: 7px solid transparent; border-bottom: 7px solid transparent; }
.tri-l { border-right: 8px solid #2d3b45; margin-right: 14px; }
.tri-r { border-left: 8px solid #2d3b45; margin-left: 14px; }

.taskbar { height: 80px; flex: none; background: #e2e2ae; display: flex; align-items: center; font-family: "Open Sans", sans-serif; }
.tb-ic { width: 36px; height: 36px; }
.tb-win { margin-left: 30px; }
.tb-mag { margin-left: 61px; }
.tb-task { margin-left: 59px; }
.tb-app { width: 48px; height: 48px; margin-right: 49.700px; }
.tb-first { margin-left: 60px; }
.tb-on { width: 96px; height: 80px; margin-left: -25px; padding: 16px 24px; background: #f1f2dd; border-bottom: 4px solid #7a9b4a; border-right: 6px solid #cfd0a0; }
.tb-on .tb-app { margin: 0; }
.tb-run { width: 80px; height: 80px; margin-left: 13px; border-bottom: 4px solid #7a9b4a; display: flex; align-items: center; justify-content: center; }
.tb-run + .tb-run { margin-left: 18px; }
.tb-calc { width: 36px; height: 48px; }
.tb-sticky { width: 42px; height: 46px; }
.clock { margin-left: auto; margin-right: 14px; display: flex; flex-direction: column; align-items: flex-end; font-size: 23.500px; line-height: 39px; color: #111; }

/* ---------- right window ---------- */
.win-right { display: flex; flex-direction: column; height: 3840px; font-family: "Open Sans", sans-serif; min-width: 0; overflow: hidden; }
.r-tabs { height: 34px; background: #7abb7c; display: flex; align-items: center; padding-left: 19px; font-size: 11.500px; color: #33463a; flex: none; }
.rt { width: 221px; display: flex; align-items: center; height: 34px; }
.rfav { width: 16px; height: 16px; }
.rt-t { margin-left: 8px; flex: 1; white-space: nowrap; overflow: hidden; }
.rt-x { width: 11px; height: 11px; color: #222; margin-right: 10px; margin-left: 4px; }
.rt-sep { width: 1px; height: 20px; background: #55745a; margin: 0 17px 0 1px; }
.rt-on { background: #c5e1c5; border-radius: 8px 8px 0 0; width: 239px; margin-left: -4px; padding-left: 15px; }
.rt-on .rt-t { margin-left: 12px; }
.rt-plus { width: 13px; height: 13px; color: #222; margin-left: 18px; }
.r-winctl { margin-left: auto; display: flex; align-items: center; gap: 35px; padding-right: 17px; }
.rwc { width: 11px; height: 11px; color: #333; }
.rwc-min { width: 11px; height: 1px; background: #333; }
.rwc-max { width: 9px; height: 11px; border: 1px solid #333; box-shadow: 2px -2px 0 -1px #333; }
.r-bar { height: 34px; background: #c5e1c5; display: flex; align-items: center; padding: 1px 0 0 14px; flex: none; }
.rnav { width: 17px; height: 17px; margin-right: 15px; color: #222; }
.rnav.dim { color: #7c917f; }
.r-omni { width: 1679px; height: 28px; margin-left: -3px; background: #f0f7f0; border-radius: 14px; display: flex; align-items: center; padding-left: 11px; flex: none; }
.r-lock { width: 11px; height: 14px; }
.r-url { margin-left: 10px; width: 1572px; font-size: 13.150px; color: #5b6a60; white-space: nowrap; overflow: hidden; flex: none; }
.r-url b { font-weight: 400; color: #1d1d1d; }
.r-oic { width: 17px; height: 17px; margin-left: 11px; }
.r-oic + .r-oic { margin-left: 13px; }
.r-ext { width: 15px; height: 16px; margin-left: 16px; }
.r-ext + .r-ext { margin-left: 17px; }
.r-ava { width: 22px; height: 22px; margin-left: 12px; }
.r-dots { width: 5px; height: 14px; margin-left: 20px; }
.r-marks { height: 35px; background: #c5e1c5; border-bottom: 2px solid #a8b9a8; display: flex; align-items: center; padding-left: 13px; gap: 16px; font-size: 11.500px; color: #2f3a33; flex: none; }
.r-mark { display: flex; align-items: center; gap: 9px; }

.xl-head { height: 48px; background: #107c41; color: #fff; display: flex; align-items: center; padding-left: 16px; font-size: 13.700px; flex: none; }
.waffle { width: 16px; height: 16px; }
.xl-brand { margin-left: 24px; font-size: 14px; }
.xl-doc { margin-left: 23px; }
.xl-chev { width: 12px; height: 12px; margin-left: 12px; }
.xl-search { width: 467px; height: 32px; margin-left: 428px; background: #c7dbd1; border-radius: 2px; display: flex; align-items: center; padding-left: 16px; color: #107c41; font-size: 14px; gap: 11px; }
.xl-mag { width: 16px; height: 18px; }
.xl-gear { width: 20px; height: 20px; margin-left: 552px; }
.xl-user { margin-left: 26px; font-size: 13px; white-space: nowrap; }
.xl-init { margin-left: auto; margin-right: 8px; width: 32px; height: 32px; border: 1px solid #fff; border-radius: 50%; display: flex; align-items: center; justify-content: center; font-size: 12px; }

.ribbon { height: 77px; background: #f3f2f1; box-shadow: 0 2px 2px rgba(0,0,0,.12); position: relative; flex: none; }
.rb-top { height: 34px; display: flex; align-items: center; padding-left: 22px; }
.rb-tabs { display: flex; gap: 32px; font-size: 13.200px; color: #333; }
.rb-tabs a { line-height: 20px; height: 30px; padding-top: 4px; }
.rb-file { margin-right: 5px; }
.rb-home { font-weight: 600; color: #222; border-bottom: 3px solid #107c41; }
.rb-btns { margin-left: auto; display: flex; gap: 9px; padding-right: 8px; align-items: center; height: 36px; padding-top: 6px; }
.rbb { height: 28px; background: #fff; border: 1px solid #d6d6d6; border-radius: 2px; display: flex; align-items: center; padding: 0 6px; gap: 3px; color: #107c41; font-size: 13px; white-space: nowrap; }
.rbb-c { width: 106px; } .rbb-u { width: 94px; } .rbb-e { width: 98px; }
.rbb-s { width: 90px; background: #107c41; border-color: #107c41; color: #fff; font-weight: 600; }
.rbb-s .tc { color: #fff; }
.rbi { width: 16px; height: 16px; }
.rb-tools { height: 43px; }
.tl { display: flex; align-items: center; gap: 13px; height: 43px; padding-left: 16px; font-size: 13px; color: #333; }
.tg { display: flex; align-items: center; gap: 4px; }
.ti { width: 22px; height: 22px; }
.tc { width: 10px; height: 10px; color: #333; flex: none; }
.tsep { width: 1px; height: 32px; background: #d2d0ce; }
.fbox { display: flex; width: 179px; height: 27px; background: #fff; border: 1px solid #8a8886; margin-left: -9px; margin-right: 0; }
.fbox-a { width: 127px; border-right: 1px solid #8a8886; display: flex; align-items: center; justify-content: space-between; padding: 0 4px; font-family: "Lato", sans-serif; }
.fbox-b { flex: 1; display: flex; align-items: center; justify-content: space-between; padding: 0 4px; }
.tx { width: 28px; text-align: center; font-size: 18px; font-family: "Liberation Sans", sans-serif; }
.tx-i { font-style: italic; font-family: "Liberation Serif", serif; }
.tdots { width: 22px; text-align: center; font-weight: 700; font-size: 14px; }
.wrap-ic { width: 22px; display: flex; align-items: flex-end; font-size: 10px; line-height: 10px; }
.wrap-t { width: 12px; }
.wrap-a { width: 10px; height: 12px; }
.sort-t { width: 8px; display: flex; flex-direction: column; font-size: 10px; line-height: 11px; text-align: center; }
.sort-a { color: #0b6fc2; }
.sort-f { width: 12px; height: 14px; margin-left: -2px; }
.tg-merge { gap: 12px; }
.tg-merge .tc { margin-left: -7px; }
.tl-t { white-space: nowrap; font-size: 13.300px; }
.gbox { width: 128px; height: 27px; margin-left: -9px; border: 1px solid #8a8886; background: #fff; display: flex; align-items: center; justify-content: space-between; padding: 0 5px; }
.tg-d { margin-left: 3px; }
.tdollar { width: 22px; font-size: 17px; text-align: center; }
.dec { width: 28px; display: flex; flex-direction: column; font-size: 10px; line-height: 12px; text-align: center; }
.dec-first { margin-left: -4px; }
.dec-a { color: #0b6fc2; }
.tg-t { margin-left: 3px; gap: 6px; }
.tg-k { margin-left: -2px; }
.tc-end { margin-left: 51px; margin-top: 22px; }

.formula { height: 30px; background: #f3f2f1; display: flex; align-items: center; padding: 2px 10px 0 4px; gap: 9px; flex: none; font-size: 13px; color: #333; }
.namebox { width: 123px; height: 23px; background: #fff; border: 1px solid #e4e4e4; display: flex; align-items: center; justify-content: space-between; padding: 0 4px; }
.fxbox { width: 88px; height: 23px; background: #fff; border: 1px solid #e4e4e4; display: flex; align-items: center; gap: 10px; padding: 0 6px 0 8px; margin-right: -6px; }
.fxi { width: 14px; height: 14px; }
.fxt { font-family: "Liberation Serif", serif; font-style: italic; font-size: 14px; }
.fxinput { flex: 1; height: 23px; background: #fff; border: 1px solid #e4e4e4; display: flex; align-items: center; justify-content: flex-end; padding-right: 2px; }

.sheet { height: 670px; background: #fff; flex: none; position: relative; }
.cols { height: 24px; background: #f3f2f1; display: flex; padding-top: 5px; font-size: 11.500px; color: #444; border-bottom: 1px solid #b8b8b8; }
.cols .corner { width: 37px; flex: none; border-right: 1px solid #d4d4d4; }
.cols span { width: 64px; flex: none; display: flex; align-items: center; justify-content: center; border-right: 1px solid #d4d4d4; }
.col-on { background: #d4d4d4; color: #107c41; font-weight: 700; border-bottom: 2px solid #107c41; }
.body { display: flex; height: 627px; }
.rows { width: 37px; flex: none; display: flex; flex-direction: column; background: #f3f2f1; font-size: 11.500px; color: #444; border-right: 1px solid #b8b8b8; }
.rows span { height: 19px; flex: none; display: flex; align-items: center; justify-content: center; border-bottom: 1px solid #d4d4d4; }
.row-on { background: #d4d4d4; color: #107c41; font-weight: 700; border-right: 2px solid #107c41; }
.cells { flex: none; width: 1868px; height: 627px; display: grid; grid-template-columns: repeat(29, 64px) 12px; grid-template-rows: repeat(33, 19px); background-color: #fff; background-image: linear-gradient(90deg, transparent 63px, #d4d4d4 63px), linear-gradient(0deg, #d4d4d4 1px, transparent 1px); background-size: 64px 19px; font-family: "Lato", sans-serif; }
.c { display: flex; align-items: center; justify-content: center; text-align: center; color: #000; font-size: 12.500px; line-height: 20px; border-right: 1px solid #000; border-bottom: 1px solid #000; }
.c-title { grid-column: 1 / 5; grid-row: 1 / 4; background: #e2efda; font-size: 24px; padding-top: 1px; }
.c-a { grid-column: 1 / 3; grid-row: 5 / 7; background: #d9e1f2; border-top: 1px solid #000; }
.c-b { grid-column: 3 / 5; grid-row: 5 / 7; background: #fce4d6; border-top: 1px solid #000; align-items: flex-end; line-height: 18px; font-size: 12.800px; white-space: nowrap; }
.c-c { grid-column: 5 / 7; grid-row: 5 / 7; background: #fff2cc; border-top: 1px solid #000; font-weight: 700; font-size: 11.500px; padding-bottom: 2px; }
.c-v1 { grid-column: 1 / 3; grid-row: 7 / 9; background: #fff; padding-top: 1px; }
.c-v2 { grid-column: 3 / 5; grid-row: 7 / 9; background: #fff; padding-top: 1px; }
.c-v3 { grid-column: 5 / 7; grid-row: 7 / 9; background: #fff; padding-top: 1px; }
.c-sel { grid-column: 7; grid-row: 11; border: 2px solid #217346; width: 66px; margin-left: -1px; height: 22px; margin-top: -1px; position: relative; background: transparent; z-index: 1; }
.handle { position: absolute; right: -3px; bottom: -3px; width: 5px; height: 5px; background: #217346; }
.vscroll { flex: none; width: 15px; display: flex; flex-direction: column; background: #e6e6e6; margin-top: 0; }
.vs-btn { height: 15px; flex: none; background: #fff; border: 1px solid #c4c4c4; font-size: 7px; line-height: 13px; text-align: center; color: #666; overflow: hidden; }
.vs-thumb { height: 400px; background: #fff; border: 1px solid #c4c4c4; flex: none; }
.vs-track { flex: 1; }
.hscroll { height: 16px; display: flex; margin-left: 37px; background: #e6e6e6; width: 1843px; }
.hs-btn { width: 15px; flex: none; background: #fff; border: 1px solid #c4c4c4; font-size: 7px; line-height: 14px; text-align: center; color: #666; overflow: hidden; }
.hs-thumb { width: 894px; flex: none; background: #fff; border: 1px solid #c4c4c4; }
.hs-track { flex: 1; }

.sheetbar { height: 33px; background: #f3f3f3; border-bottom: 2px solid #e3e3e3; display: flex; align-items: center; padding-left: 11px; font-size: 13px; color: #333; flex: none; }
.sb-nav { width: 30px; color: #aaa; font-size: 20px; }
.sb-menu { width: 14px; height: 14px; margin-left: 1px; }
.sb-tab { margin-left: 19px; height: 33px; width: 45px; border-bottom: 3px solid #217346; line-height: 30px; text-align: center; font-weight: 600; }
.sb-plus { width: 12px; height: 12px; margin-left: 18px; }
.status { height: 23px; background: #fff; border-bottom: 2px solid #a8b9a8; display: flex; align-items: center; padding: 1px 0 0 14px; gap: 17px; font-size: 11.600px; color: #555; flex: none; white-space: nowrap; }
.st-chev { margin: 0 22px 0 1291px; width: 8px; height: 8px; }
.st-zoom { display: flex; gap: 5px; align-items: center; margin-left: 27px; }
.st-zoom i { font-size: 15px; }
.dlbar { height: 56px; background: #c5e1c5; display: flex; align-items: center; padding-left: 15px; flex: none; color: #222; }
.dl-ic { width: 26px; height: 34px; }
.dl-t { display: flex; flex-direction: column; margin-left: 7px; }
.dl-n { font-size: 12.500px; line-height: 20px; }
.dl-s { font-size: 10px; line-height: 18px; }
.dl-up { width: 12px; height: 10px; margin-left: 68px; }
.dl-sep { width: 1px; height: 44px; background: #7d9a80; margin-left: 16px; }
.dl-all { margin-left: auto; width: 78px; height: 32px; border: 1px solid #b4d0c0; border-radius: 4px; display: flex; align-items: center; justify-content: center; color: #1a63c7; font-size: 12px; }
.dl-x { width: 11px; height: 11px; color: #222; margin: 0 10px 0 13px; }

.r-taskbar { height: 40px; background: #e2e2ae; display: flex; align-items: center; padding-left: 16px; flex: none; }
.rtb-win { width: 17px; height: 17px; }
.rtb-search { width: 344px; height: 40px; margin-left: 15px; background: #fff; border: 1px solid #d8d8d8; display: flex; align-items: center; padding-left: 11px; font-size: 13.500px; color: #333; overflow: hidden; white-space: nowrap; }
.rtb-mag { width: 17px; height: 17px; margin-right: 10px; }
.rtb-pie { width: 70px; height: 38px; margin-left: auto; margin-right: 3px; }
.rtb-ic { width: 25px; height: 25px; margin-right: 24.200px; }
.rtb-task { width: 18px; height: 18px; margin-left: 17px; margin-right: 28px; }
.rtb-on { width: 46px; height: 40px; margin-left: -12px; padding: 8px 11px; background: #f1f2dd; border-bottom: 2px solid #7a9b4a; margin-right: 3px; }
.rtb-on .rtb-ic { margin: 0; }
.rtb-run { width: 40px; height: 40px; border-bottom: 2px solid #7a9b4a; display: flex; align-items: center; justify-content: center; margin-right: 9px; }
.rtb-calc { width: 18px; height: 24px; }
.rtb-sticky { width: 21px; height: 23px; }
.tray { margin-left: auto; display: flex; align-items: center; font-size: 12px; color: #111; white-space: nowrap; padding-right: 20px; }
.tr-w { width: 24px; height: 40px; }
.tr-t { margin-left: 8px; font-size: 12.500px; }
.tr-t + .tr-t { margin-left: 9px; }
.tr-i { width: 15px; height: 15px; margin-left: 9px; }
.tr-t + .tr-i { margin-left: 15px; }
.tr-clock { display: flex; flex-direction: column; align-items: center; font-size: 12px; line-height: 20px; margin-left: 2px; width: 78px; }
.tr-note { width: 18px; height: 24px; margin-left: 5px; position: relative; }
.tr-note svg { width: 16px; height: 18px; }
.tr-badge { position: absolute; right: -6px; bottom: -6px; width: 17px; height: 17px; border-radius: 50%; background: #c8c8b8; border: 1px solid #777; font-size: 11px; line-height: 15px; text-align: center; }
.void { flex: 1; background: #000; }
```
